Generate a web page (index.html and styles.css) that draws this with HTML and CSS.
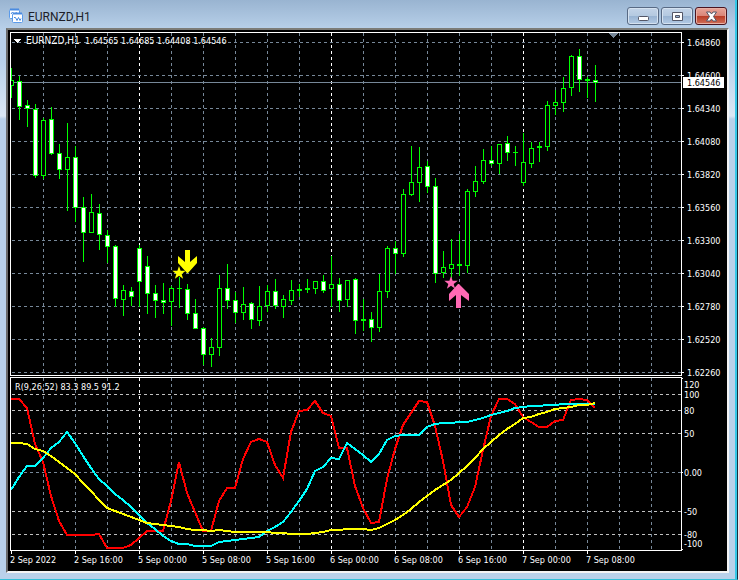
FILE: index.html
```
<!DOCTYPE html>
<html lang="en">
<head>
    <meta charset="UTF-8">
    <meta name="viewport" content="width=device-width, initial-scale=1.0">
    <title>EURNZD,H1</title>
    <link rel="stylesheet" href="styles.css">
</head>
<body>
    <div class="window">
        <!-- Title bar -->
        <header class="titlebar">
            <svg class="app-icon" width="16" height="16" viewBox="0 0 16 16">
                <rect x="1.500" y="1.500" width="10" height="9" rx="1" fill="#fff" stroke="#5b9bea"/>
                <path d="M2 1.500h9" stroke="#4a8be0" stroke-width="2"/>
                <path d="M3 6l1.500-2 2 3 2-3" fill="none" stroke="#4a8be0"/>
                <rect x="4.500" y="5.500" width="10" height="9" rx="1" fill="#fff" stroke="#5b9bea"/>
                <path d="M5 5.500h9" stroke="#4a8be0" stroke-width="2"/>
                <path d="M6 9.500l1.500 0 1.500 3 1.500-3 1.500 3 1-2" fill="none" stroke="#4a8be0"/>
            </svg>
            <h1>EURNZD,H1</h1>
            <div class="buttons">
                <button type="button" aria-label="Minimize">
                    <svg width="13" height="11" viewBox="0 0 13 11"><rect x="1.500" y="5.500" width="10" height="4" rx="1" fill="#fff" stroke="#535666"/></svg>
                </button>
                <button type="button" aria-label="Maximize">
                    <svg width="13" height="11" viewBox="0 0 13 11"><path d="M1.500 1.500h10v8h-10z M4.500 4.500v2h4v-2z" fill="#fff" fill-rule="evenodd" stroke="#535666"/></svg>
                </button>
                <button type="button" class="close" aria-label="Close">
                    <svg width="13" height="11" viewBox="0 0 13 11"><path d="M1.500 1h3.500l1.500 2 1.500-2h3.500l-3 4.500 3 4.500h-3.500l-1.500-2-1.500 2h-3.500l3-4.500z" fill="#fff" stroke="#535666"/></svg>
                </button>
            </div>
        </header>

        <!-- Chart, filled in by chart.js -->
        <main class="chart-frame">
            <svg id="chart" class="chart" viewBox="8 30 719 541" role="img" aria-label="EURNZD hourly chart"></svg>
        </main>
    </div>

    <script src="chart.js"></script>
</body>
</html>
```

FILE: styles.css
```
body {
    margin: 0;
    background-color: #e4e8ee;
    font-family: Roboto, "Open Sans", sans-serif;
}

/* Window frame */
.window {
    box-sizing: border-box;
    margin-right: 1px;
    padding: 0 8px 6px 6px;
    border-right: 1px solid #1c2c3c;
    border-bottom: 1px solid #35c0d8;
    background: linear-gradient(#99b4d1, #b9d1ea 30px, #b9d1ea 60px, #dbe8f5 116px, #b9d1ea 119px);
    box-shadow: inset -2px 0 #35c8e8;
}
.titlebar {
    display: flex;
    align-items: center;
    height: 28px;
}
.app-icon {
    margin: 4px 4px 0 2px;
}
.titlebar h1 {
    flex: 1;
    margin: 5px 0 0 0;
    font-size: 12px;
    line-height: 16px;
    font-weight: normal;
    color: #1e1e28;
}
.buttons {
    display: flex;
    gap: 2px;
    margin: 4px 2px 0 0;
}
.buttons button {
    display: flex;
    align-items: center;
    justify-content: center;
    width: 32px;
    height: 18px;
    padding: 0;
    border: 1px solid #586a84;
    border-radius: 3px;
    background: linear-gradient(#c3d4e8, #b4c9e0 50%, #98b3d2 50%, #b3cae4);
    box-shadow: inset 0 0 0 1px #d5e2f0;
}
.buttons svg {
    flex: none;
}
.buttons .close {
    border-color: #4a1420;
    background: linear-gradient(#e8a599, #d98477 50%, #b83a24 50%, #d0705a);
    box-shadow: inset 0 0 0 1px #e8b0a5;
}

/* Chart area */
.chart-frame {
    border: 2px solid #696969;
    border-top-color: #7c7c78;
    border-right-color: #f4f4f4;
    border-bottom-color: #f4f4f4;
    background-color: #000;
}
.chart {
    display: block;
    width: 100%;
    height: auto;
    shape-rendering: crispEdges;
    font-family: "DejaVu Sans Condensed", "DejaVu Sans", sans-serif;
    font-stretch: condensed;
    font-size: 9px;
}
.chart text {
    fill: #fff;
}
.chart .symbol {
    font-size: 10px;
}
.chart .price-text {
    fill: #000;
}
.border {
    fill: none;
    stroke: #fff;
}
.grid {
    stroke: #778899;
    stroke-dasharray: 3 3;
}
.grid.day {
    stroke: #fff;
}
.grid.level {
    stroke: #c0c0c0;
}
.price-line {
    stroke: #778899;
}
.marker {
    fill: #778899;
}
.white {
    fill: #fff;
}
.candle {
    stroke: #00ff00;
    fill: #000;
}
.candle.down {
    fill: #fff;
}
.line {
    fill: none;
    stroke-width: 2;
}
.fast {
    stroke: #ff0000;
}
.middle {
    stroke: #00ffff;
}
.slow {
    stroke: #ffff00;
}
.sell {
    fill: #ffff00;
    shape-rendering: auto;
}
.buy {
    fill: #ff69b4;
    shape-rendering: auto;
}
```

FILE: chart.js
```
const chart = document.getElementById('chart');
const START = 11;
const STEP = 8;

// high, body top, body bottom, low, falling (1) or rising (0)
const candles = [
    [68, 80, 85, 97, 0], [76, 81, 106, 119, 1], [100, 105, 108, 126, 1], [104, 109, 175, 177, 1],
    [118, 120, 175, 178, 0], [107, 119, 153, 154, 1], [144, 153, 169, 178, 1], [123, 157, 169, 210, 0],
    [146, 157, 207, 221, 1], [197, 207, 232, 261, 1], [194, 212, 232, 232, 0], [204, 213, 234, 249, 1],
    [230, 235, 246, 262, 1], [245, 246, 298, 306, 1], [285, 290, 299, 315, 0], [287, 291, 296, 305, 1],
    [245, 248, 281, 306, 1], [256, 266, 293, 313, 1], [285, 293, 300, 317, 1], [283, 300, 302, 313, 1],
    [286, 288, 301, 325, 0], [277, 288, 288, 307, 0], [284, 289, 313, 319, 1], [299, 313, 328, 328, 1],
    [327, 328, 354, 364, 1], [338, 347, 354, 366, 0], [275, 288, 347, 355, 0], [264, 288, 300, 308, 1],
    [292, 300, 312, 322, 1], [287, 304, 312, 319, 0], [302, 303, 319, 328, 1], [286, 306, 320, 325, 0],
    [285, 291, 305, 311, 0], [279, 291, 305, 308, 1], [295, 299, 306, 317, 0], [280, 290, 300, 304, 0],
    [284, 289, 290, 296, 0], [279, 288, 289, 292, 0], [281, 281, 288, 293, 0], [275, 281, 290, 292, 1],
    [256, 284, 288, 306, 0], [278, 284, 300, 311, 1], [280, 280, 299, 306, 0], [278, 279, 320, 333, 1],
    [299, 319, 320, 330, 0], [312, 319, 327, 341, 1], [274, 291, 327, 331, 0], [246, 248, 291, 297, 0],
    [241, 248, 253, 273, 1], [189, 194, 253, 256, 0], [146, 182, 194, 195, 0], [147, 167, 182, 201, 0],
    [161, 166, 186, 192, 1], [178, 186, 273, 282, 1], [251, 267, 272, 277, 0], [239, 264, 268, 277, 0],
    [234, 264, 265, 275, 0], [189, 191, 265, 272, 0], [166, 181, 191, 196, 0], [149, 160, 181, 183, 0],
    [146, 160, 163, 165, 1], [144, 144, 163, 173, 0], [136, 143, 152, 160, 1], [146, 152, 152, 165, 0],
    [133, 162, 182, 185, 0], [142, 148, 163, 167, 0], [142, 146, 147, 161, 0], [101, 105, 146, 150, 0],
    [90, 102, 105, 114, 0], [77, 88, 102, 111, 0], [55, 56, 87, 95, 0], [49, 56, 79, 91, 1],
    [77, 79, 80, 97, 0], [65, 80, 82, 101, 1]
];

// one point per candle
const fast = [
    398, 398, 407, 443, 461, 495, 520, 534, 534, 534, 534, 533, 547, 547, 547, 544, 537, 530, 530, 530,
    500, 461, 492, 511, 530, 530, 500, 487, 487, 458, 441, 438, 441, 464, 477, 431, 410, 409, 400, 412,
    415, 447, 447, 485, 507, 522, 521, 478, 448, 424, 412, 400, 401, 425, 460, 504, 516, 506, 486, 449,
    415, 398, 398, 403, 416, 421, 426, 426, 420, 419, 399, 398, 399, 407
];
const middle = [
    489, 476, 465, 465, 457, 447, 441, 431, 442, 455, 467, 478, 485, 493, 499, 506, 514, 522, 528, 535,
    540, 543, 543, 545, 545, 545, 541, 540, 539, 538, 537, 536, 530, 526, 521, 511, 500, 488, 470, 466,
    457, 458, 442, 448, 454, 461, 453, 439, 435, 434, 434, 434, 426, 423, 422, 422, 421, 421, 419, 417,
    414, 412, 410, 407, 406, 405, 405, 404, 404, 403, 403, 403, 403, 403
];
const slow = [
    442, 442, 443, 448, 450, 455, 461, 467, 473, 482, 490, 499, 507, 510, 513, 516, 519, 522, 523, 524,
    525, 526, 528, 529, 529, 530, 529, 530, 531, 531, 531, 531, 531, 532, 532, 533, 533, 533, 532, 531,
    529, 529, 528, 528, 528, 529, 527, 523, 519, 514, 508, 501, 495, 489, 484, 479, 472, 465, 457, 448,
    441, 434, 428, 423, 417, 416, 413, 411, 408, 407, 406, 404, 404, 402
];

const prices = ['1.64860', '1.64600', '1.64340', '1.64080', '1.63820', '1.63560', '1.63300', '1.63040', '1.62780', '1.62520', '1.62260'];
const times = ['2 Sep 2022', '2 Sep 16:00', '5 Sep 00:00', '5 Sep 08:00', '5 Sep 16:00', '6 Sep 00:00', '6 Sep 08:00', '6 Sep 16:00', '7 Sep 00:00', '7 Sep 08:00'];
const levels = [['120', 384], ['100', 394], ['80', 410], ['50', 433], ['0.00', 472], ['-50', 511], ['-80', 534], ['-100', 543]];

// lines are moved by half a pixel so that they stay sharp
function line(x1, y1, x2, y2, name) {
    return `<path class="${name}" d="M${x1} ${y1}L${x2} ${y2}" transform="translate(${x1 === x2 ? '.5 0' : '0 .5'})"/>`;
}

function text(x, y, label, name = '') {
    return `<text x="${x}" y="${y}" class="${name}">${label}</text>`;
}

function curve(points, name) {
    const list = points.map((y, i) => `${START + i * STEP},${y + 1}`).join(' ');
    return `<polyline class="line ${name}" points="${list}"/>`;
}

function candle([high, top, bottom, low, down], i) {
    const x = START + i * STEP;
    const wick = line(x, high, x, low + 1, 'candle');
    if (top === bottom) {
        return wick + line(x - 2, top, x + 3, top, 'candle');
    }
    return wick + `<rect class="candle ${down ? 'down' : ''}" x="${x - 1.5}" y="${top + 0.5}" width="4" height="${bottom - top}"/>`;
}

function star(cx, cy, r, name) {
    const points = [];
    for (let i = 0; i < 10; i++) {
        const radius = i % 2 ? r * 0.4 : r;
        const angle = Math.PI * (i / 5 - 0.5);
        points.push(`${(cx + radius * Math.cos(angle)).toFixed(1)},${(cy + radius * Math.sin(angle)).toFixed(1)}`);
    }
    return `<polygon class="${name}" points="${points.join(' ')}"/>`;
}

let out = '<clipPath id="plot"><rect x="11" y="33" width="670" height="517"/></clipPath>';

// Grid
for (let x = 43; x < 680; x += 32) {
    const day = (x - 139) % 192 === 0 ? 'grid day' : 'grid';
    out += line(x, 33, x, 375, day) + line(x, 378, x, 550, day);
}
prices.forEach((price, i) => {
    const y = 42 + i * 33;
    out += line(12, y, 681, y, 'grid') + line(682, y, 684, y, 'border') + text(687, y + 4, price);
});
levels.forEach(([label, y]) => {
    if (label !== '120' && label !== '-100') {
        out += line(12, y, 681, y, label === '0.00' ? 'grid' : 'grid level');
    }
    out += text(684, y + 4, label);
});
[378, 472, 549].forEach(y => {
    out += line(682, y, 683, y, 'border');
});
out += line(11, 82, 681, 82, 'price-line');

// Candles and indicator lines
out += `<g clip-path="url(#plot)">${candles.map(candle).join('')}`;
out += curve(fast, 'fast') + curve(middle, 'middle') + curve(slow, 'slow') + '</g>';

// Signals
out += star(179, 273, 7, 'sell');
out += '<polygon class="sell" points="185,250 190,250 190,262 197,256 197,263 188,273 187,273 178,263 178,256 185,262"/>';
out += star(451, 283, 7, 'buy');
out += '<polygon class="buy" points="456,308 461,308 461,295 469,301 469,294 459,284 458,284 449,294 449,301 456,295"/>';

// Borders, time scale and captions
out += '<rect class="border" x="10.5" y="32.5" width="671" height="343"/>';
out += '<rect class="border" x="10.5" y="377.5" width="671" height="173"/>';
times.forEach((time, i) => {
    const x = START + i * STEP * 8;
    out += line(x, 551, x, 554, 'border') + text(x - 1, 563, time);
});
out += '<path class="marker" d="M608 33h10l-5 5z"/><path class="white" d="M14 39h7l-3.500 4z"/>';
out += text(26, 44, 'EURNZD,H1', 'symbol') + text(85, 44, '1.64565 1.64685 1.64408 1.64546');
out += text(15, 390, 'R(9,26,52) 83.3 89.5 91.2');
out += '<rect class="white" x="683" y="77" width="41" height="11"/>' + text(687, 86, '1.64546', 'price-text');

chart.innerHTML = out;
```
